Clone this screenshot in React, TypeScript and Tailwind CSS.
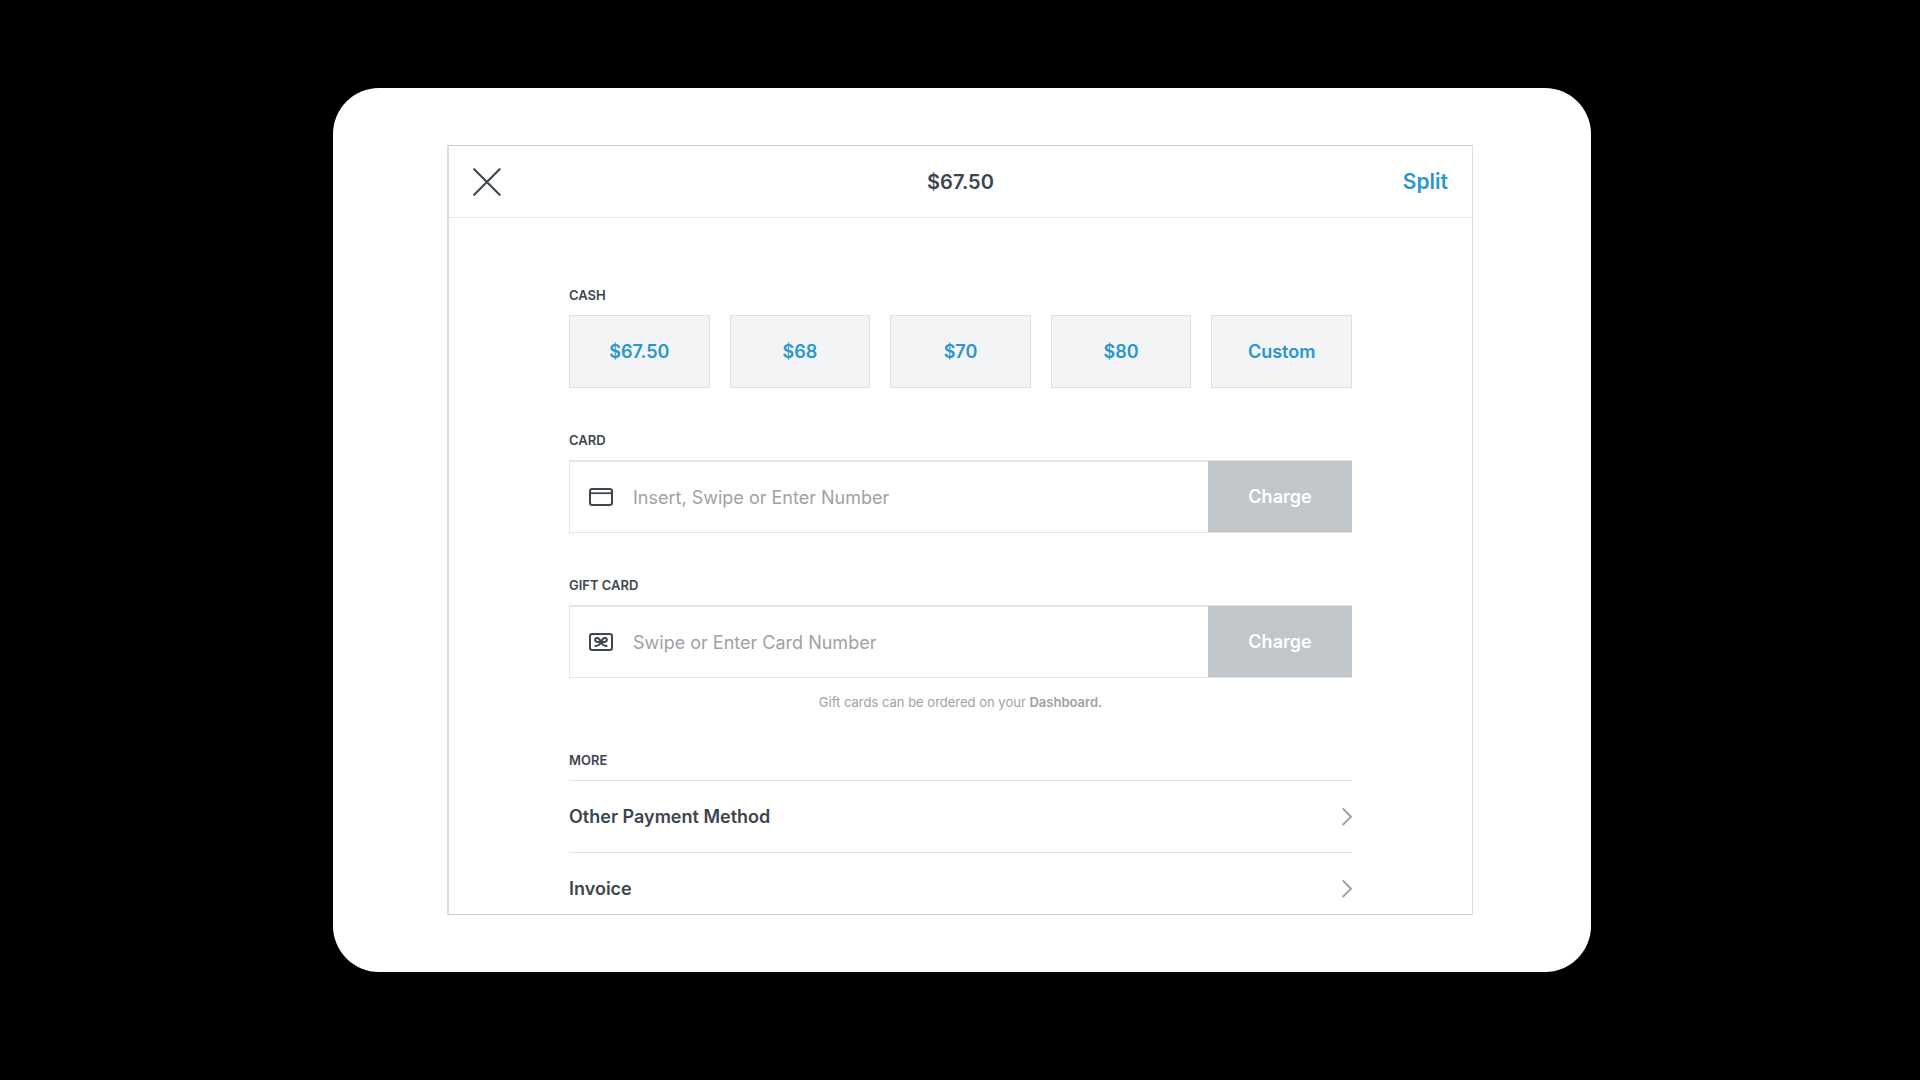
import React from "react";

const cashAmounts = ["$67.50", "$68", "$70", "$80", "Custom"];
const moreOptions = ["Other Payment Method", "Invoice"];

function CloseIcon() {
  return (
    <svg className="w-7 h-7" viewBox="0 0 28 28" fill="none" stroke="currentColor" strokeWidth="2.1" strokeLinecap="round">
      <path d="M1.2 1.2 26.6 26.8M26.6 1.2 1.2 26.8" />
    </svg>
  );
}

function CardIcon() {
  return (
    <svg className="w-6 h-[18px] shrink-0" viewBox="0 0 24 18" fill="none" stroke="currentColor" strokeWidth="2">
      <rect x="1" y="1" width="22" height="16" rx="2.2" />
      <path d="M1 5.2h22" strokeWidth="1.8" />
    </svg>
  );
}

function GiftCardIcon() {
  return (
    <svg className="w-6 h-[18px] shrink-0" viewBox="0 0 24 18" fill="none" stroke="currentColor" strokeWidth="2">
      <rect x="1" y="1" width="22" height="16" rx="2.2" />
      <g strokeWidth="2" strokeLinecap="round" strokeLinejoin="round">
        <path d="M12 9.2C11 6.4 9.4 4.6 7.6 5 5.8 5.4 5.6 7.8 7.2 8.6 8.4 9.2 10.4 9.2 12 9.2Z" />
        <path d="M12 9.2C13 6.4 14.6 4.6 16.4 5 18.2 5.4 18.4 7.8 16.8 8.6 15.6 9.2 13.6 9.2 12 9.2Z" />
        <path d="M12 9.2C11 11.4 9.4 13 6.4 13M12 9.2C13 11.4 14.6 13 17.6 13" />
      </g>
    </svg>
  );
}

function ChevronIcon() {
  return (
    <svg className="w-[10px] h-[18px]" viewBox="0 0 10 18" fill="none" stroke="currentColor" strokeWidth="2">
      <path d="M0.7 0.4 9 8.7 0.7 17" />
    </svg>
  );
}

interface CardFieldProps {
  id: string;
  label: string;
  placeholder: string;
  icon: React.ReactNode;
}

function CardField({ id, label, placeholder, icon }: CardFieldProps) {
  return (
    <div className="mt-11">
      <label htmlFor={id} className="block text-[13px] leading-4 font-semibold">
        {label}
      </label>
      <div className="mt-3 flex h-[73px]">
        <div className="flex-1 flex items-center gap-5 pl-[19px] border border-t-2 border-r-0 border-[#e3e6e8]">
          {icon}
          <input
            id={id}
            type="text"
            placeholder={placeholder}
            className="flex-1 h-full text-lg outline-none placeholder:text-[#9da2a6]"
          />
        </div>
        <button className="w-36 bg-[#c1c6ca] border-y border-[#dfe2e5] text-lg font-semibold text-white">
          Charge
        </button>
      </div>
    </div>
  );
}

export default function App() {
  return (
    <div className="min-h-screen bg-black pt-[88px] pl-1 text-[#3d454d] font-['Inter',sans-serif]">
      {/* Tablet frame */}
      <div className="w-full max-w-[1258px] mx-auto bg-white rounded-[46px] pt-[57px] pb-[57px] pl-[114px] pr-[118px]">
        <div className="aspect-[4/3] overflow-hidden flex flex-col border border-l-2 border-y-[#cccccc] border-x-[#dcdcdc]">
          <header className="h-[72px] shrink-0 grid grid-cols-3 items-center px-6 border-b border-[#e6e8ea]">
            <button aria-label="Close" className="justify-self-start">
              <CloseIcon />
            </button>
            <h1 className="text-center text-xl font-semibold">$67.50</h1>
            <button className="justify-self-end text-[21px] font-semibold text-[#2996cc]">Split</button>
          </header>

          <main className="flex-1 min-h-0 px-[120px] pt-[69px]">
            <h2 className="text-[13px] leading-4 font-semibold">CASH</h2>
            <div className="mt-3 grid grid-cols-5 gap-5">
              {cashAmounts.map((amount) => (
                <button
                  key={amount}
                  className="h-[73px] bg-[#f2f4f6] border border-[#dce0e4] text-lg font-semibold text-[#2996cc]"
                >
                  {amount}
                </button>
              ))}
            </div>

            <CardField id="card" label="CARD" placeholder="Insert, Swipe or Enter Number" icon={<CardIcon />} />
            <CardField id="gift-card" label="GIFT CARD" placeholder="Swipe or Enter Card Number" icon={<GiftCardIcon />} />
            <p className="mt-4 text-center text-[13px] leading-4 text-[#9da2a6]">
              Gift cards can be ordered on your{" "}
              <a href="#dashboard" className="font-semibold">Dashboard.</a>
            </p>

            <h2 className="mt-[42px] text-[13px] leading-4 font-semibold">MORE</h2>
            <div className="mt-3">
              {moreOptions.map((option) => (
                <button
                  key={option}
                  className="w-full h-[72px] flex items-center justify-between border-t border-[#e0e3e6] text-lg font-semibold"
                >
                  {option}
                  <span className="text-[#9da2a6]">
                    <ChevronIcon />
                  </span>
                </button>
              ))}
            </div>
          </main>
        </div>
      </div>
    </div>
  );
}
